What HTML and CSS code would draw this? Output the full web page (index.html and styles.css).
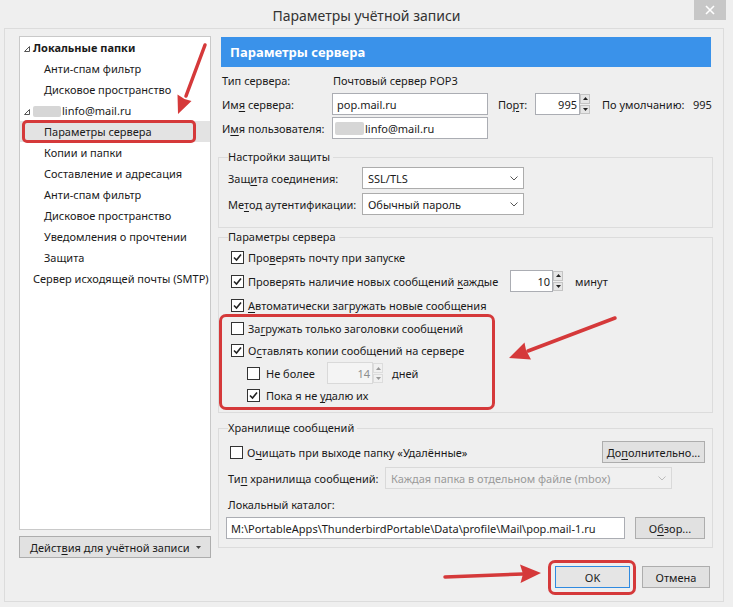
FILE: index.html
```html
<!DOCTYPE html>
<html lang="ru">
<head>
<meta charset="utf-8">
<title>Параметры учётной записи</title>
<link rel="stylesheet" href="styles.css">
</head>
<body>
<div class="window">
  <div class="titlebar">
    <span></span>
    <div class="title">Параметры учётной записи</div>
    <div class="close"><svg width="10" height="10" viewBox="0 0 10 10"><path d="M1 1L9 9M9 1L1 9" stroke="#fff" stroke-width="1.6"/></svg></div>
  </div>
  <div class="frame">
    <div class="left">
      <div class="tree">
        <div class="ti root bold"><svg class="tw" width="6" height="6" viewBox="0 0 6 6"><path d="M5.5 0.5V5.5H0.5Z" fill="none" stroke="#555" stroke-width="1"/></svg>Локальные папки</div>
        <div class="ti child">Анти-спам фильтр</div>
        <div class="ti child">Дисковое пространство</div>
        <div class="ti root"><svg class="tw" width="6" height="6" viewBox="0 0 6 6"><path d="M5.5 0.5V5.5H0.5Z" fill="none" stroke="#555" stroke-width="1"/></svg><span class="blur tblur"></span>linfo@mail.ru</div>
        <div class="ti sel"><div class="selmark">Параметры сервера</div></div>
        <div class="ti child">Копии и папки</div>
        <div class="ti child">Составление и адресация</div>
        <div class="ti child">Анти-спам фильтр</div>
        <div class="ti child">Дисковое пространство</div>
        <div class="ti child">Уведомления о прочтении</div>
        <div class="ti child">Защита</div>
        <div class="ti smtp">Сервер исходящей почты (SMTP)</div>
      </div>
      <div class="btn actions"><span>Дейст<u>в</u>ия для учётной записи</span><svg width="5" height="3" viewBox="0 0 5 3"><path d="M0 0H5L2.5 3Z" fill="#444"/></svg></div>
    </div>

    <div class="right">
      <div class="header">Параметры сервера</div>

      <div class="srow first">
        <span class="slabel">Тип сервера:</span>
        <span class="stype">Почтовый сервер POP3</span>
      </div>
      <div class="srow">
        <span class="slabel">Им<u>я</u> сервера:</span>
        <div class="input w-server">pop.mail.ru</div>
        <span class="portlbl">По<u>р</u>т:</span>
        <div class="spin">
          <div class="input num w-port">995</div>
          <div class="arrows"><span><svg width="5" height="3" viewBox="0 0 5 3"><path d="M0 3H5L2.5 0Z" fill="#222"/></svg></span><span><svg width="5" height="3" viewBox="0 0 5 3"><path d="M0 0H5L2.5 3Z" fill="#222"/></svg></span></div>
        </div>
        <span class="deflbl">По умолчанию:</span>
        <span>995</span>
      </div>
      <div class="srow">
        <span class="slabel">И<u>м</u>я пользователя:</span>
        <div class="input w-server"><span class="blur iblur"></span>linfo@mail.ru</div>
      </div>

      <fieldset class="fs fs1">
        <legend>Настройки защиты</legend>
        <div class="frow first">
          <span class="flabel">Защ<u>и</u>та соединения:</span>
          <div class="select w-sel"><span>SSL/TLS</span><svg width="8" height="5" viewBox="0 0 8 5"><path d="M0.5 0.5L4 4L7.5 0.5" fill="none" stroke="#555" stroke-width="1"/></svg></div>
        </div>
        <div class="frow">
          <span class="flabel">Ме<u>т</u>од аутентификации:</span>
          <div class="select w-sel"><span>Обычный пароль</span><svg width="8" height="5" viewBox="0 0 8 5"><path d="M0.5 0.5L4 4L7.5 0.5" fill="none" stroke="#555" stroke-width="1"/></svg></div>
        </div>
      </fieldset>

      <fieldset class="fs fs2">
        <legend>Параметры сервера</legend>
        <div class="crow">
          <span class="cb on"><svg width="11" height="11" viewBox="0 0 11 11"><path d="M2 5.5L4.5 8L9 2.5" fill="none" stroke="#222" stroke-width="1.6"/></svg></span>
          <span>Про<u>в</u>ерять почту при запуске</span>
        </div>
        <div class="crow">
          <span class="cb on"><svg width="11" height="11" viewBox="0 0 11 11"><path d="M2 5.5L4.5 8L9 2.5" fill="none" stroke="#222" stroke-width="1.6"/></svg></span>
          <span class="every">Проверять наличие новых сообщений <u>к</u>аждые</span>
          <div class="spin">
            <div class="input num w-min">10</div>
            <div class="arrows"><span><svg width="5" height="3" viewBox="0 0 5 3"><path d="M0 3H5L2.5 0Z" fill="#222"/></svg></span><span><svg width="5" height="3" viewBox="0 0 5 3"><path d="M0 0H5L2.5 3Z" fill="#222"/></svg></span></div>
          </div>
          <span class="unit">минут</span>
        </div>
        <div class="crow">
          <span class="cb on"><svg width="11" height="11" viewBox="0 0 11 11"><path d="M2 5.5L4.5 8L9 2.5" fill="none" stroke="#222" stroke-width="1.6"/></svg></span>
          <span><u>А</u>втоматически загружать новые сообщения</span>
        </div>
        <div class="mark">
          <div class="crow">
            <span class="cb"></span>
            <span>За<u>г</u>ружать только заголовки сообщений</span>
          </div>
          <div class="crow">
            <span class="cb on"><svg width="11" height="11" viewBox="0 0 11 11"><path d="M2 5.5L4.5 8L9 2.5" fill="none" stroke="#222" stroke-width="1.6"/></svg></span>
            <span>О<u>с</u>тавлять копии сообщений на сервере</span>
          </div>
          <div class="crow sub">
            <span class="cb"></span>
            <span class="notmore">Не более</span>
            <div class="spin dis">
              <div class="input num w-days">14</div>
              <div class="arrows"><span><svg width="5" height="3" viewBox="0 0 5 3"><path d="M0 3H5L2.5 0Z" fill="#999"/></svg></span><span><svg width="5" height="3" viewBox="0 0 5 3"><path d="M0 0H5L2.5 3Z" fill="#999"/></svg></span></div>
            </div>
            <span class="unit2">дней</span>
          </div>
          <div class="crow sub">
            <span class="cb on"><svg width="11" height="11" viewBox="0 0 11 11"><path d="M2 5.5L4.5 8L9 2.5" fill="none" stroke="#222" stroke-width="1.6"/></svg></span>
            <span>Пока я не <u>у</u>далю их</span>
          </div>
        </div>
      </fieldset>

      <fieldset class="fs fs3">
        <legend>Хранилище сообщений</legend>
        <div class="crow r1">
          <span class="cb"></span>
          <span>О<u>ч</u>ищать при выходе папку «Удалённые»</span>
          <div class="btn b-more">До<u>п</u>олнительно...</div>
        </div>
        <div class="frow r2">
          <span class="tlabel">Ти<u>п</u> хранилища сообщений:</span>
          <div class="select disabled w-store"><span>Каждая папка в отдельном файле (mbox)</span><svg width="8" height="5" viewBox="0 0 8 5"><path d="M0.5 0.5L4 4L7.5 0.5" fill="none" stroke="#bbb" stroke-width="1"/></svg></div>
        </div>
        <div class="r3">Локальный каталог:</div>
        <div class="frow r4">
          <div class="input w-path">M:\PortableApps\ThunderbirdPortable\Data\profile\Mail\pop.mail-1.ru</div>
          <div class="btn b-browse">О<u>б</u>зор...</div>
        </div>
      </fieldset>

      <div class="dlgbtns">
        <div class="okmark"><div class="btn b-ok">OK</div></div>
        <div class="btn b-cancel">Отмена</div>
      </div>
    </div>
  </div>
</div>

<svg class="annot" width="733" height="607" viewBox="0 0 733 607">
  <g stroke="#d5393a" stroke-width="3.5" stroke-linecap="round" fill="none">
    <path d="M205 45L186 96"/>
    <path d="M615 318L528 351"/>
    <path d="M445 577L523 574"/>
  </g>
  <g fill="#d5393a">
    <path d="M178 114L191.5 101L184.5 99L177.5 94.5Z"/>
    <path d="M509 358L531 359.5L526 350L524.5 342.5Z"/>
    <path d="M541 573L520.5 583L523 574L520 564.5Z"/>
  </g>
</svg>
</body>
</html>
```

FILE: styles.css
```css
* { box-sizing: border-box; }
html, body { margin: 0; padding: 0; }
body {
  width: 733px;
  height: 607px;
  overflow: hidden;
  position: relative;
  background: #efefef;
  font-family: "Noto Sans", "Segoe UI", sans-serif;
  font-size: 11px;
  color: #1a1a1a;
}
u { text-decoration: underline; text-underline-offset: 2px; text-decoration-thickness: 1px; }

.window { height: 607px; display: flex; flex-direction: column; }

.titlebar {
  height: 28px;
  display: grid;
  grid-template-columns: 1fr auto 1fr;
  align-items: center;
}
.title { font-size: 14px; color: #333; padding-top: 2px; }
.close {
  justify-self: end;
  align-self: start;
  width: 32px;
  height: 20px;
  margin-right: 7px;
  background: #c7c7c7;
  display: flex;
  align-items: center;
  justify-content: center;
}

.frame {
  flex: 1;
  margin: 0 9px 5px 4px;
  border: 1px solid #dcdcdc;
  display: flex;
  gap: 7px;
  padding: 7px 0 0 14px;
}

/* left column */
.left { width: 192px; display: flex; flex-direction: column; gap: 6px; }
.tree {
  height: 494px;
  background: #fff;
  border: 1px solid #c9c9c9;
}
.ti { height: 21px; display: flex; align-items: center; white-space: nowrap; }
.ti.root { padding-left: 4px; }
.ti.bold { font-weight: bold; }
.tw { margin: 2px 3px 0 0; flex-shrink: 0; }
.ti.child { padding-left: 24px; }
.ti.smtp { padding-left: 13px; }
.ti.sel { background: #e3e3e3; }
.selmark {
  height: 23px;
  width: 174px;
  margin: -1px 0 -1px 2px;
  border: 3px solid #d5393a;
  border-radius: 5px;
  padding-left: 19px;
  display: flex;
  align-items: center;
}
.blur { display: inline-block; background: #d6d6d6; border-radius: 2px; filter: blur(0.6px); }
.tblur { width: 28px; height: 11px; margin: 1px 1px 0 0; }
.iblur { width: 29px; height: 13px; margin: 0 1px 0 -2px; }

.btn {
  height: 22px;
  border: 1px solid #adadad;
  background: #e1e1e1;
  display: flex;
  align-items: center;
  justify-content: center;
  color: #1a1a1a;
  white-space: nowrap;
}
.actions { justify-content: space-between; padding: 0 9px 0 10px; }

/* right column */
.right { width: 495px; display: flex; flex-direction: column; }
.header {
  height: 30px;
  margin: 1px 2px 0 3px;
  background: #3a92ea;
  color: #fff;
  font-weight: bold;
  font-size: 13px;
  padding-left: 9px;
  display: flex;
  align-items: center;
}

.srow { display: flex; align-items: center; height: 22px; padding-left: 4px; margin-top: 2px; white-space: nowrap; }
.slabel { width: 110px; flex-shrink: 0; }
.stype { padding-left: 1px; }

.input {
  height: 22px;
  border: 1px solid #abadb3;
  background: #fff;
  padding: 0 4px;
  display: flex;
  align-items: center;
  white-space: nowrap;
  overflow: hidden;
}
.input.num { justify-content: flex-end; padding-right: 2px; }
.w-server { width: 156px; }
.portlbl { width: 37px; margin-left: 10px; }
.w-port { width: 45px; }
.deflbl { width: 91px; margin-left: 12px; }

.spin { display: flex; }
.arrows { width: 10px; height: 22px; display: flex; flex-direction: column; gap: 1px; padding: 1px 0; }
.arrows span {
  flex: 1;
  background: #e6e6e6;
  border: 1px solid #c4c4c4;
  display: flex;
  align-items: center;
  justify-content: center;
}
.spin.dis .input { background: #f4f4f4; border-color: #d9d9d9; color: #8d8d8d; }
.spin.dis .arrows span { background: #f0f0f0; border-color: #dcdcdc; }

/* fieldsets */
.fs {
  border: 1px solid #dcdcdc;
  margin: 0;
  padding: 0 7px 0 9px;
  min-width: 0;
}
.fs legend { padding: 0 3px 0 0; line-height: 16px; }
.fs1 { margin-top: 10px; padding-bottom: 12px; }
.fs2 { margin-top: 1px; padding-bottom: 5px; }
.fs3 { margin-top: 7px; padding-bottom: 8px; }

.frow { display: flex; align-items: center; height: 22px; margin-top: 4px; white-space: nowrap; }
.frow.first { margin-top: 2px; }
.flabel { width: 134px; flex-shrink: 0; }
.select {
  height: 22px;
  border: 1px solid #acacac;
  background: #fff;
  display: flex;
  align-items: center;
  justify-content: space-between;
  padding: 0 5px 0 5px;
}
.w-sel { width: 162px; }
.select.disabled { background: #f0f0f0; border-color: #d9d9d9; color: #9a9a9a; }

.crow { display: flex; align-items: center; height: 24px; white-space: nowrap; }
.cb {
  width: 13px;
  height: 13px;
  flex-shrink: 0;
  border: 1px solid #333;
  background: #fff;
  margin: 0 4px 0 3px;
  display: flex;
  align-items: center;
  justify-content: center;
}
.every { width: 262px; flex-shrink: 0; }
.w-min { width: 43px; }
.unit { margin-left: 12px; }

.mark {
  border: 3px solid #d5393a;
  border-radius: 7px;
  margin: -3px 0 -3px -9px;
  width: 276px;
  padding-left: 6px;
}
.mark .crow { height: 22.5px; }
.crow.sub { padding-left: 16px; }
.crow.sub .cb { margin-right: 6px; }
.notmore { width: 61px; flex-shrink: 0; }
.w-days { width: 46px; }
.unit2 { margin-left: 9px; }

.r1 { margin-top: 4px; }
.r1 .cb { margin-left: 2px; }
.b-more { width: 103px; margin-left: auto; }
.r2 { margin-top: 3px; }
.tlabel { width: 157px; flex-shrink: 0; }
.w-store { width: 287px; }
.r3 { margin-top: 8px; height: 16px; line-height: 16px; }
.r4 { margin-left: -2px; }
.w-path { width: 399px; }
.b-browse { width: 70px; margin-left: auto; }

.dlgbtns {
  margin-top: 18px;
  display: flex;
  justify-content: flex-end;
  align-items: center;
  padding-right: 3px;
}
.okmark {
  border: 3px solid #d5393a;
  border-radius: 7px;
  padding: 3px 3px 4px 4px;
  margin: -6px 0 -7px 0;
}
.b-ok { width: 75px; border-color: #2f8ae0; background: #e5e5e5; }
.b-cancel { width: 68px; margin-left: 6px; }

.annot { position: absolute; left: 0; top: 0; pointer-events: none; }
```
